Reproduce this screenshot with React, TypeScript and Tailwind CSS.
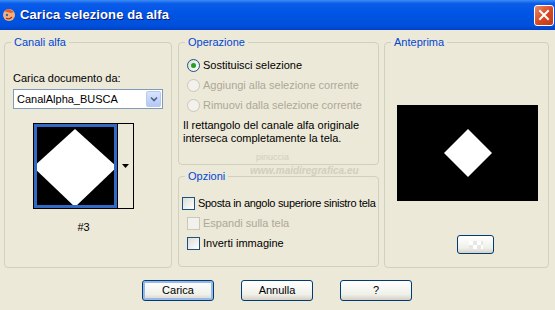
import React from 'react';

const Group: React.FC<{ title: string; className?: string; children?: React.ReactNode }> = ({ title, className = '', children }) => (
  <fieldset className={`border border-[#D0D0BF] rounded-[4px] m-0 p-0 min-w-0 ${className}`}>
    <legend className="ml-[6px] px-[3px] leading-[13px] text-[#0046D5]">{title}</legend>
    {children}
  </fieldset>
);

const Radio: React.FC<{ checked?: boolean; disabled?: boolean; label: string }> = ({ checked, disabled, label }) => (
  <div className="h-[20px] flex items-center ml-[8px]">
    <span
      className={`w-[13px] h-[13px] rounded-full border flex items-center justify-center ${
        disabled ? 'border-[#CAC8BB] bg-[#F2F1EC]' : 'border-[#1C5180] bg-[linear-gradient(135deg,#DCDCD7,#FFFFFF)]'
      }`}
    >
      {checked && <span className="w-[5px] h-[5px] rounded-full bg-[#21A121]" />}
    </span>
    <span className={`ml-[3px] whitespace-nowrap ${disabled ? 'text-[#ACA899]' : ''}`}>{label}</span>
  </div>
);

const Check: React.FC<{ disabled?: boolean; label: string; indent: string; tight?: boolean }> = ({ disabled, label, indent, tight }) => (
  <div className={`h-[20px] flex items-center ${indent}`}>
    <span
      className={`w-[13px] h-[13px] shrink-0 border ${
        disabled ? 'border-[#CAC8BB] bg-[#F2F1EC]' : 'border-[#1C5180] bg-[linear-gradient(135deg,#DCDCD7,#FFFFFF)]'
      }`}
    />
    <span className={`ml-[3px] whitespace-nowrap ${tight ? 'tracking-[-0.3px]' : ''} ${disabled ? 'text-[#ACA899]' : ''}`}>{label}</span>
  </div>
);

const Button: React.FC<{ label: string; focused?: boolean }> = ({ label, focused }) => (
  <div
    className={`w-[72px] h-[21px] rounded-[3px] border border-[#003C74] flex items-center justify-center bg-[linear-gradient(180deg,#FFFFFF,#F0F0EA_70%,#D6D0C5)] ${
      focused ? 'shadow-[inset_0_0_0_2px_#98B8EA]' : ''
    }`}
  >
    {label}
  </div>
);

export default function App() {
  return (
    <div className="w-[555px] h-[310px] bg-[#ECE9D8] flex flex-col font-['Liberation_Sans',Arial,sans-serif] text-[11px] text-black relative overflow-hidden">
      {/* title bar */}
      <div className="h-[30px] shrink-0 flex items-center bg-[linear-gradient(180deg,#3C8CF3_0%,#0A5BEA_12%,#0054E3_50%,#0050DB_85%,#0041C6_100%)]">
        <svg width="16" height="16" viewBox="0 0 16 16" className="ml-[1px]">
          <circle cx="8" cy="8" r="6" fill="#F0B080" />
          <path d="M3 4 L8 2 L13 5 L10 6 L6 5 Z" fill="#E06020" />
          <circle cx="6" cy="8" r="1.2" fill="#4060C0" />
          <path d="M5 11 Q8 13 11 10" stroke="#B03010" strokeWidth="1.2" fill="none" />
        </svg>
        <span className="ml-[3px] text-white font-bold text-[13px] tracking-[0.1px] [text-shadow:1px_1px_0_#0A1E7A]">
          Carica selezione da alfa
        </span>
        <div className="ml-auto mr-[1px] w-[20px] h-[21px] rounded-[3px] border border-white bg-[linear-gradient(135deg,#E88A6E,#D9461E_55%,#C0391A)] flex items-center justify-center">
          <svg width="12" height="12" viewBox="0 0 12 12">
            <path d="M2 2 L10 10 M10 2 L2 10" stroke="white" strokeWidth="2" strokeLinecap="square" />
          </svg>
        </div>
      </div>

      {/* groups */}
      <div className="flex pl-[4px] pt-[6px]">
        <Group title="Canali alfa" className="w-[168px] h-[232px]">
          <div className="mt-[23px] ml-[8px] leading-[13px]">Carica documento da:</div>
          <div className="mt-[4px] ml-[8px] w-[150px] h-[20px] border border-[#7F9DB9] bg-white flex items-center">
            <span className="ml-[3px]">CanalAlpha_BUSCA</span>
            <div className="ml-auto mr-[1px] w-[15px] h-[16px] rounded-[2px] border border-[#B9C9EF] bg-[linear-gradient(180deg,#D8E4FC,#B4C8F6)] flex items-center justify-center">
              <svg width="8" height="6" viewBox="0 0 8 6">
                <path d="M1 1.5 L4 4.5 L7 1.5" stroke="#4D6185" strokeWidth="1.6" fill="none" />
              </svg>
            </div>
          </div>
          <div className="mt-[14px] ml-[28px] w-[101px] h-[86px] border border-black flex">
            <div className="w-[83px] h-full border-[3px] border-[#316AC5] bg-black">
              <svg width="77" height="78" viewBox="0 0 77 78" className="block">
                <polygon points="38,2 80,40 38,80 -4,40" fill="white" />
              </svg>
            </div>
            <div className="flex-1 border-l border-black bg-[#ECE9D8] flex justify-center pt-[40px]">
              <svg width="7" height="4" viewBox="0 0 7 4">
                <path d="M0 0 L7 0 L3.5 4 Z" fill="black" />
              </svg>
            </div>
          </div>
          <div className="mt-[12px] ml-[28px] w-[101px] text-center leading-[13px]">#3</div>
        </Group>

        <div className="ml-[6px] w-[201px] flex flex-col">
          <Group title="Operazione" className="h-[129px]">
            <div className="mt-[6px]">
              <Radio checked label="Sostituisci selezione" />
              <Radio disabled label="Aggiungi alla selezione corrente" />
              <Radio disabled label="Rimuovi dalla selezione corrente" />
            </div>
            <p className="mt-[4px] ml-[4px] leading-[13px]">
              Il rettangolo del canale alfa originale
              <br />
              interseca completamente la tela.
            </p>
          </Group>
          <Group title="Opzioni" className="mt-[5px] h-[97px]">
            <div className="mt-[10px]">
              <Check tight label="Sposta in angolo superiore sinistro tela" indent="ml-[3px]" />
              <Check disabled label="Espandi sulla tela" indent="ml-[8px]" />
              <Check label="Inverti immagine" indent="ml-[8px]" />
            </div>
          </Group>
        </div>

        <Group title="Anteprima" className="ml-[5px] w-[165px] h-[232px]">
          <div className="mt-[56px] ml-[12px] w-[141px] h-[96px] bg-black flex items-center justify-center">
            <svg width="48" height="48" viewBox="0 0 48 48">
              <polygon points="24,0 48,24 24,48 0,24" fill="white" />
            </svg>
          </div>
          <div className="mt-[34px] ml-[72px] w-[37px] h-[19px] rounded-[3px] border border-[#003C74] bg-[linear-gradient(180deg,#FFFFFF,#F0F0EA_70%,#D6D0C5)] flex items-center justify-center">
            <div className="w-[14px] h-[8px] bg-[repeating-conic-gradient(#E6E6E6_0%_25%,#FFFFFF_0%_50%)] bg-[length:8px_8px]" />
          </div>
        </Group>
      </div>

      {/* buttons */}
      <div className="flex pl-[142px] mt-[12px] gap-[27px]">
        <Button label="Carica" focused />
        <Button label="Annulla" />
        <Button label="?" />
      </div>

      {/* watermark */}
      <div className="absolute left-[236px] top-[152px] text-[#C8C4B4] opacity-70 pointer-events-none">
        <div className="ml-[20px] text-[9px] leading-[10px]">pinuccia</div>
        <div className="mt-[4px] ml-[14px] text-[10px] italic font-bold leading-[10px]">www.maidiregrafica.eu</div>
      </div>
    </div>
  );
}
